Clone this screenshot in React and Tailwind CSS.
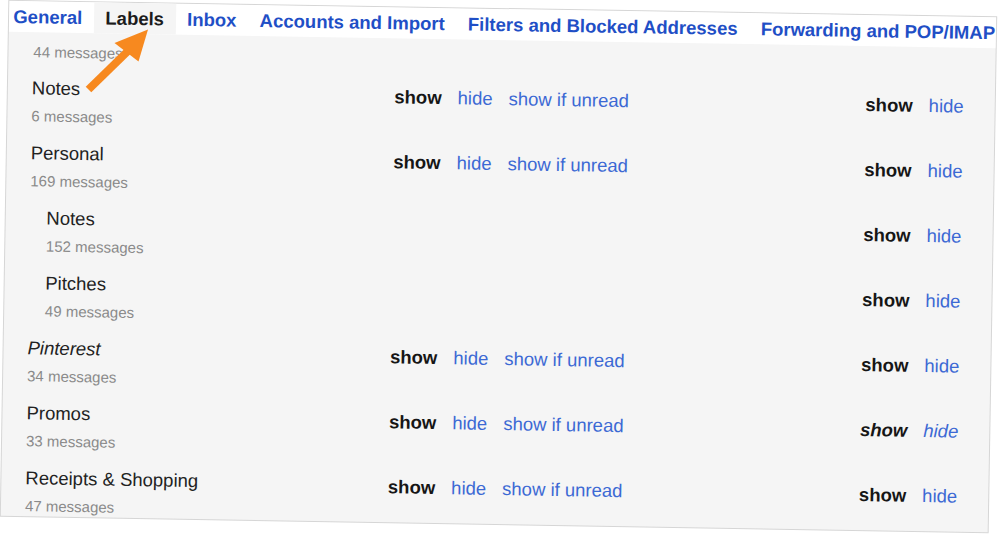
import React from 'react';

const tabs = [
    { label: 'General', first: true },
    { label: 'Labels', active: true },
    { label: 'Inbox' },
    { label: 'Accounts and Import' },
    { label: 'Filters and Blocked Addresses' },
    { label: 'Forwarding and POP/IMAP' },
];

const rows = [
    { name: 'Notes', count: '6 messages', unread: true },
    { name: 'Personal', count: '169 messages', unread: true },
    { name: 'Notes', count: '152 messages', sub: true },
    { name: 'Pitches', count: '49 messages', sub: true },
    { name: 'Pinterest', count: '34 messages', unread: true, italicName: true },
    { name: 'Promos', count: '33 messages', unread: true, italicRight: true },
    { name: 'Receipts & Shopping', count: '47 messages', unread: true },
];

function Arrow() {
    return (
        <svg className="absolute left-[80px] top-[24px] pointer-events-none" width="75" height="72" viewBox="0 0 75 72">
            <line x1="8.5" y1="65.5" x2="48" y2="27" stroke="#f7891f" strokeWidth="8" strokeLinecap="butt" />
            <polygon points="68,5.5 34.5,19 58.5,37.5" fill="#f7891f" />
        </svg>
    );
}

function Row({ row }) {
    return (
        <div className="flex h-[65px] pl-[24px]">
            <div className={row.sub ? 'w-[362.6px] pl-[16.7px]' : 'w-[362.6px]'}>
                <div className={`text-[18.5px] leading-[22px] text-[#222] ${row.italicName ? 'italic' : ''}`}>{row.name}</div>
                <div className="mt-[7.7px] text-[15px] leading-[18px] text-[#8a8a8a]">{row.count}</div>
            </div>
            <div className="w-[471.1px] pt-[3px]">
                {row.unread && (
                    <div className="flex gap-4 text-[18.5px] leading-[22px]">
                        <span className="font-bold text-[#161616]">show</span>
                        <span className="text-[#3c69d4]">hide</span>
                        <span className="text-[#3c69d4]">show if unread</span>
                    </div>
                )}
            </div>
            <div className="pt-[3px]">
                <div className={`flex gap-4 text-[18.5px] leading-[22px] ${row.italicRight ? 'italic' : ''}`}>
                    <span className="font-bold text-[#161616]">show</span>
                    <span className="text-[#3c69d4]">hide</span>
                </div>
            </div>
        </div>
    );
}

export default function App() {
    return (
        <div className="relative w-[1000px] h-[536px] overflow-hidden bg-white font-[family-name:'Liberation_Sans',Arial,sans-serif]">
            <div className="ml-[4.5px] mt-[8.5px] w-[987px] h-[515px] rotate-[0.95deg] bg-[#f5f5f5] ring-1 ring-[#d6d6d6] overflow-hidden">
                <div className="flex h-[31px] bg-white whitespace-nowrap">
                    {tabs.map((t) => (
                        <div
                            key={t.label}
                            className={`${t.first ? 'pl-[4.25px] pr-[11.6px]' : 'px-[11.6px]'} pt-[5px] text-[18.5px] leading-[22px] font-bold ${t.active ? 'bg-[#f5f5f5] text-[#1c1c1c]' : 'text-[#1f4fc6]'}`}
                        >
                            {t.label}
                        </div>
                    ))}
                </div>
                <div className="pl-[24.9px] mt-[11.4px] mb-[15.6px] text-[15px] leading-[18px] text-[#8a8a8a]">44 messages</div>
                {rows.map((r, i) => (
                    <Row key={i} row={r} />
                ))}
            </div>
            <Arrow />
        </div>
    );
}
